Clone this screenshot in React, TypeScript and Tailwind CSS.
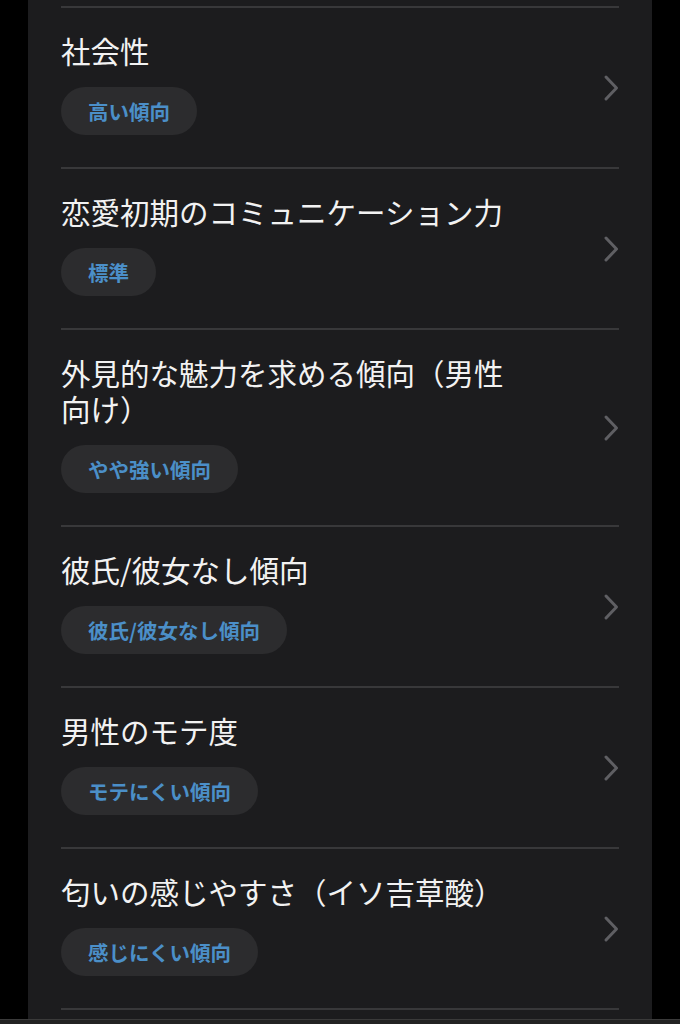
import React from 'react';

interface Trait {
  title: string;
  badge: string;
}

const traits: Trait[] = [
  { title: '社会性', badge: '高い傾向' },
  { title: '恋愛初期のコミュニケーション力', badge: '標準' },
  { title: '外見的な魅力を求める傾向（男性向け）', badge: 'やや強い傾向' },
  { title: '彼氏/彼女なし傾向', badge: '彼氏/彼女なし傾向' },
  { title: '男性のモテ度', badge: 'モテにくい傾向' },
  { title: '匂いの感じやすさ（イソ吉草酸）', badge: '感じにくい傾向' },
];

const Chevron = () => (
  <svg width="16" height="28" viewBox="0 0 16 28" fill="none" className="shrink-0">
    <path d="M3 3 L13.5 14 L3 25" stroke="#5f5f63" strokeWidth="3" strokeLinecap="round" strokeLinejoin="round" />
  </svg>
);

const TraitRow: React.FC<{ trait: Trait }> = ({ trait }) => (
  <div className="flex items-center border-t-2 border-[#38383a]">
    <div className="flex-1 pt-[24px] pb-[32px]">
      <p className="max-w-[460px] text-[29.5px] leading-[36px] text-[#f2f2f2]">{trait.title}</p>
      <div className="mt-[19px] inline-flex h-[48px] items-center rounded-full bg-[#2c2c2e] px-[27px]">
        <span className="text-[20.5px] font-bold text-[#4b8fc8]">{trait.badge}</span>
      </div>
    </div>
    <Chevron />
  </div>
);

export default function App() {
  return (
    <div
      className="flex h-[1024px] flex-col overflow-hidden bg-black"
      style={{ fontFamily: '"Noto Sans CJK JP", "Noto Sans", sans-serif' }}
    >
      <div className="mx-[28px] flex-1 overflow-hidden bg-[#1c1c1e] px-[33px] pt-[6px]">
        {traits.map((t) => (
          <TraitRow key={t.title} trait={t} />
        ))}
        <div className="border-t-2 border-[#38383a]" />
      </div>
      <div className="h-[5px] border-t border-[#3a3a3a] bg-[#222222]" />
    </div>
  );
}
